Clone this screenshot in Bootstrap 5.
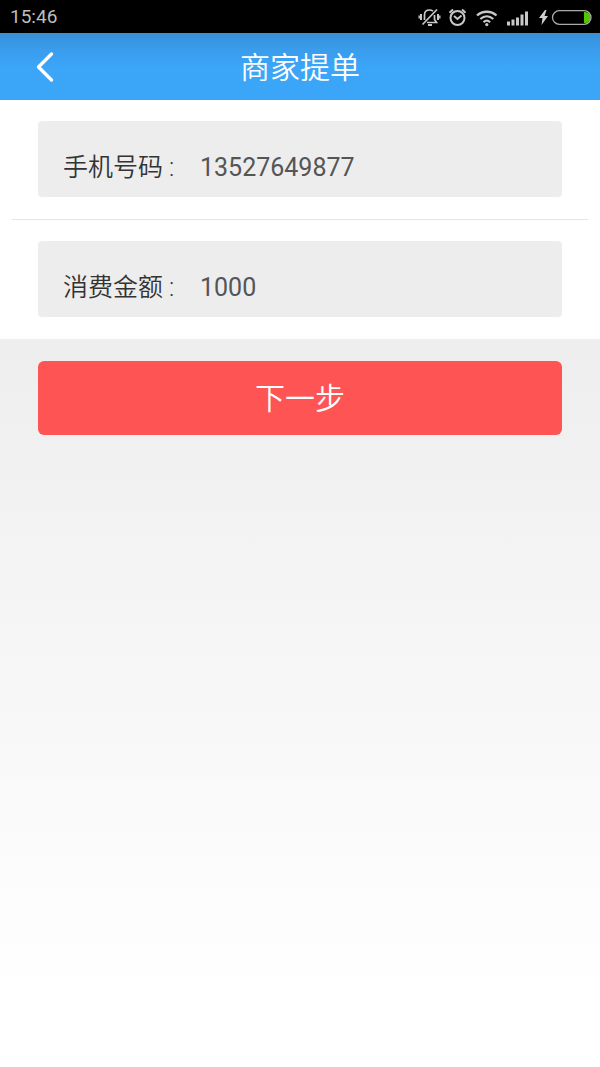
<!DOCTYPE html>
<html lang="zh-CN">
<head>
<meta charset="utf-8">
<meta name="viewport" content="width=device-width, initial-scale=1">
<title>商家提单</title>
<link href="https://cdn.jsdelivr.net/npm/bootstrap@5.3.0/dist/css/bootstrap.min.css" rel="stylesheet">
<style>
  html { height: 100%; }
  body {
    min-height: 100%;
    font-family: Roboto, "Noto Sans CJK SC", sans-serif;
    background: linear-gradient(#eee 32%, #fff 94%);
  }
  .status-bar { height: 33px; padding: 0 8px 0 10px; background: #000; color: #bebebe; font-size: 19px; line-height: 34px; }
  .status-bar svg { display: block; }
  .title-bar {
    height: 67px;
    background: linear-gradient(#3790d8, #3a9bea 22%, #3ba5f8 50%);
    color: #fff;
  }
  .title-bar h1 { padding-top: 2px; font-size: 30px; line-height: 40px; font-weight: 350; }
  .back-link { left: 24px; width: 40px; height: 44px; }
  .field-row { padding: 21px 38px 22px; }
  .field-box { height: 76px; padding: 18px 25px 0; background: #ededed; border-radius: 4px; }
  .field-box label { width: 137px; color: #333; font-size: 25px; line-height: 36px; font-weight: 350; }
  .field-box input { color: #555; font-size: 25px; line-height: 36px; min-width: 0; outline: 0; }
  .divider { height: 1px; margin: 0 12px; background: #e6e6e6; }
  .action-row { padding: 22px 38px; }
  .btn-next, .btn-next:hover, .btn-next:active {
    height: 74px; padding: 2px 0 0; background: #ff5454; color: #fff; border: 0; border-radius: 6px;
    font-size: 30px; line-height: 40px; font-weight: 350;
  }
</style>
</head>
<body>
<div class="status-bar d-flex justify-content-between align-items-center">
  <time>15:46</time>
  <div class="d-flex align-items-center">
    <svg width="122" height="24" viewBox="-2 1 122 24" fill="none" stroke="#c8c8c8" stroke-width="1.7" aria-hidden="true">
      <path d="M6.500 16V11c0-3 2-5 5-5 1.500 0 2.500.4 3.500 1.200M16.500 11v4.500l2 3H9"/>
      <path d="M4.500 20.500 19 5.500"/>
      <path d="M10 21h4" stroke-width="2"/>
      <path d="M3 10v6M20 10v6" stroke-width="2"/>
      <path d="M1.200 11.500v3M21.800 11.500v3" stroke-width="1.400"/>
      <circle cx="39.500" cy="14" r="7" stroke-width="2"/>
      <path d="m36 12 3.500 3 4-3.500" stroke-width="1.900"/>
      <path d="M31.500 8.800 35 5.500M47.500 8.800 44 5.500" stroke-width="2"/>
      <path d="M59 11.500c5.500-5 14-5 19.500 0" stroke-width="2.300"/>
      <path d="M62.300 15c4-3.500 9-3.500 13 0" stroke-width="2.300"/>
      <path d="M65.500 18.200c2-2 4.600-2 6.600 0" stroke-width="2.200"/>
      <circle cx="68.800" cy="20.600" r="1.600" fill="#c8c8c8" stroke="none"/>
      <path d="M90.500 21.500v-4M95 21.500v-6M99.500 21.500v-8M104 21.500v-11M108.500 21.500v-14" stroke-width="3"/>
    </svg>
    <svg width="54" height="24" viewBox="-3 0 54 24" fill="none" aria-hidden="true">
      <path d="M4 5-2 13h3.500L.500 20 7 11H3.500L5.500 5z" fill="#d0d0d0"/>
      <path d="M43 7h1a5.500 5.500 0 0 1 0 11h-1z" fill="#4fc800"/>
      <rect x="11.500" y="5.700" width="38.500" height="13.600" rx="6.800" stroke="#aaa" stroke-width="1.300"/>
    </svg>
  </div>
</div>

<header class="title-bar position-relative d-flex align-items-center justify-content-center">
  <a href="#" class="back-link position-absolute d-flex align-items-center justify-content-center text-white" aria-label="返回">
    <svg width="20" height="32" viewBox="0 0 20 32" fill="none" stroke="#fff" stroke-width="3.400" stroke-linecap="round" stroke-linejoin="round" aria-hidden="true"><path d="M17.500 3 4.500 16l13 13"/></svg>
  </a>
  <h1 class="mb-0">商家提单</h1>
</header>

<form>
  <div class="bg-white">
    <div class="field-row">
      <div class="field-box d-flex align-items-center">
        <label for="phone" class="flex-shrink-0">手机号码 :</label>
        <input id="phone" type="tel" value="13527649877" class="flex-grow-1 border-0 bg-transparent p-0">
      </div>
    </div>
    <div class="divider"></div>
    <div class="field-row">
      <div class="field-box d-flex align-items-center">
        <label for="amount" class="flex-shrink-0">消费金额 :</label>
        <input id="amount" type="text" inputmode="decimal" value="1000" class="flex-grow-1 border-0 bg-transparent p-0">
      </div>
    </div>
  </div>
  <div class="action-row">
    <button type="button" class="btn btn-next w-100">下一步</button>
  </div>
</form>
<script src="https://cdn.jsdelivr.net/npm/bootstrap@5.3.0/dist/js/bootstrap.bundle.min.js"></script>
</body>
</html>
